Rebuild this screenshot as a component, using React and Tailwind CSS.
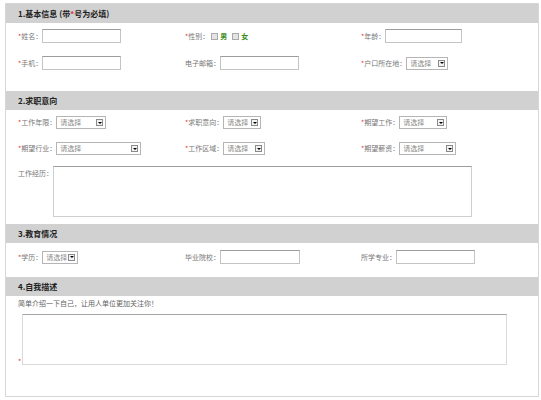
import React from "react";

const font = { fontFamily: '"Noto Sans CJK SC", "Liberation Sans", sans-serif' };

function Star() {
  return <span className="text-[#e53333]">*</span>;
}

function Label({ req, children, className = "" }) {
  return (
    <span className={"text-[7px] text-[#777] whitespace-nowrap leading-none " + className}>
      {req && <Star />}
      {children}：
    </span>
  );
}

function Input({ w }) {
  return (
    <div
      className="h-[14px] bg-white border border-[#c4c4c4] border-t-[#9d9d9d]"
      style={{ width: w }}
    />
  );
}

function Select({ w }) {
  return (
    <div
      className="h-[13px] bg-white border border-[#b5b5b5] flex items-center justify-between pl-[3px] pr-[2px]"
      style={{ width: w }}
    >
      <span className="text-[7px] text-[#888] leading-none">请选择</span>
      <span className="w-[7px] h-[7px] border border-[#8a8a8a] bg-[#f2f2f2] flex items-center justify-center">
        <span className="w-0 h-0 border-l-[2px] border-r-[2px] border-t-[2px] border-l-transparent border-r-transparent border-t-black" />
      </span>
    </div>
  );
}

function Header({ children }) {
  return (
    <div className="h-[19px] bg-[#d1d1d1] flex items-center pl-[12px] text-[8px] font-bold text-[#222] leading-none">
      {children}
    </div>
  );
}

function Row({ children, className = "" }) {
  return (
    <div className={"grid grid-cols-[167px_176px_1fr] pl-[12px] items-center " + className}>
      {children}
    </div>
  );
}

function Cell({ children }) {
  return <div className="flex items-center">{children}</div>;
}

function Check() {
  return <span className="w-[7px] h-[7px] border border-[#aaa] bg-[#e4e4e4] mx-[2px]" />;
}

export default function App() {
  return (
    <div className="w-[541px] h-[400px] bg-white pt-[3px] pl-[5px]" style={font}>
      <div className="w-[534px] h-[394px] border border-[#d6d6d6] flex flex-col">
        <Header>
          1.基本信息&nbsp;(带<span className="text-[#e53333]">*</span>号为必填)
        </Header>
        <div className="pt-[6px] pb-[21px] flex flex-col gap-[13px]">
          <Row>
            <Cell><Label req>姓名</Label><Input w={79} /></Cell>
            <Cell>
              <Label req>性别</Label>
              <Check /><span className="text-[7px] text-[#3d8c1a] font-bold leading-none">男</span>
              <span className="w-[3px]" />
              <Check /><span className="text-[7px] text-[#3d8c1a] font-bold leading-none">女</span>
            </Cell>
            <Cell><Label req>年龄</Label><Input w={77} /></Cell>
          </Row>
          <Row>
            <Cell><Label req>手机</Label><Input w={79} /></Cell>
            <Cell><Label>电子邮箱</Label><Input w={79} /></Cell>
            <Cell><Label req>户口所在地</Label><Select w={42} /></Cell>
          </Row>
        </div>

        <Header>2.求职意向</Header>
        <div className="pt-[6px] pb-[7px] flex flex-col">
          <Row>
            <Cell><Label req>工作年限</Label><Select w={50} /></Cell>
            <Cell><Label req>求职意向</Label><Select w={38} /></Cell>
            <Cell><Label req>期望工作</Label><Select w={48} /></Cell>
          </Row>
          <Row className="mt-[13px]">
            <Cell><Label req>期望行业</Label><Select w={85} /></Cell>
            <Cell><Label req>工作区域</Label><Select w={42} /></Cell>
            <Cell><Label req>期望薪资</Label><Select w={57} /></Cell>
          </Row>
          <div className="flex items-start pl-[12px] mt-[11px]">
            <Label className="mt-[4px]">工作经历</Label>
            <div className="w-[419px] h-[51px] border border-[#cfcfcf] border-t-[#9d9d9d]" />
          </div>
        </div>

        <Header>3.教育情况</Header>
        <div className="pt-[7px] pb-[13px]">
          <Row>
            <Cell><Label req>学历</Label><Select w={36} /></Cell>
            <Cell><Label>毕业院校</Label><Input w={80} /></Cell>
            <Cell><Label>所学专业</Label><Input w={79} /></Cell>
          </Row>
        </div>

        <Header>4.自我描述</Header>
        <div className="pl-[12px] pt-[4px]">
          <div className="text-[7px] text-[#666] leading-none">简单介绍一下自己，让用人单位更加关注你！</div>
          <div className="flex items-end mt-[7px]">
            <span className="text-[7px] text-[#e53333] leading-none">*</span>
            <div className="w-[485px] h-[51px] ml-[1px] border border-[#dadada] border-t-[#a5a5a5]" />
          </div>
        </div>
      </div>
    </div>
  );
}
